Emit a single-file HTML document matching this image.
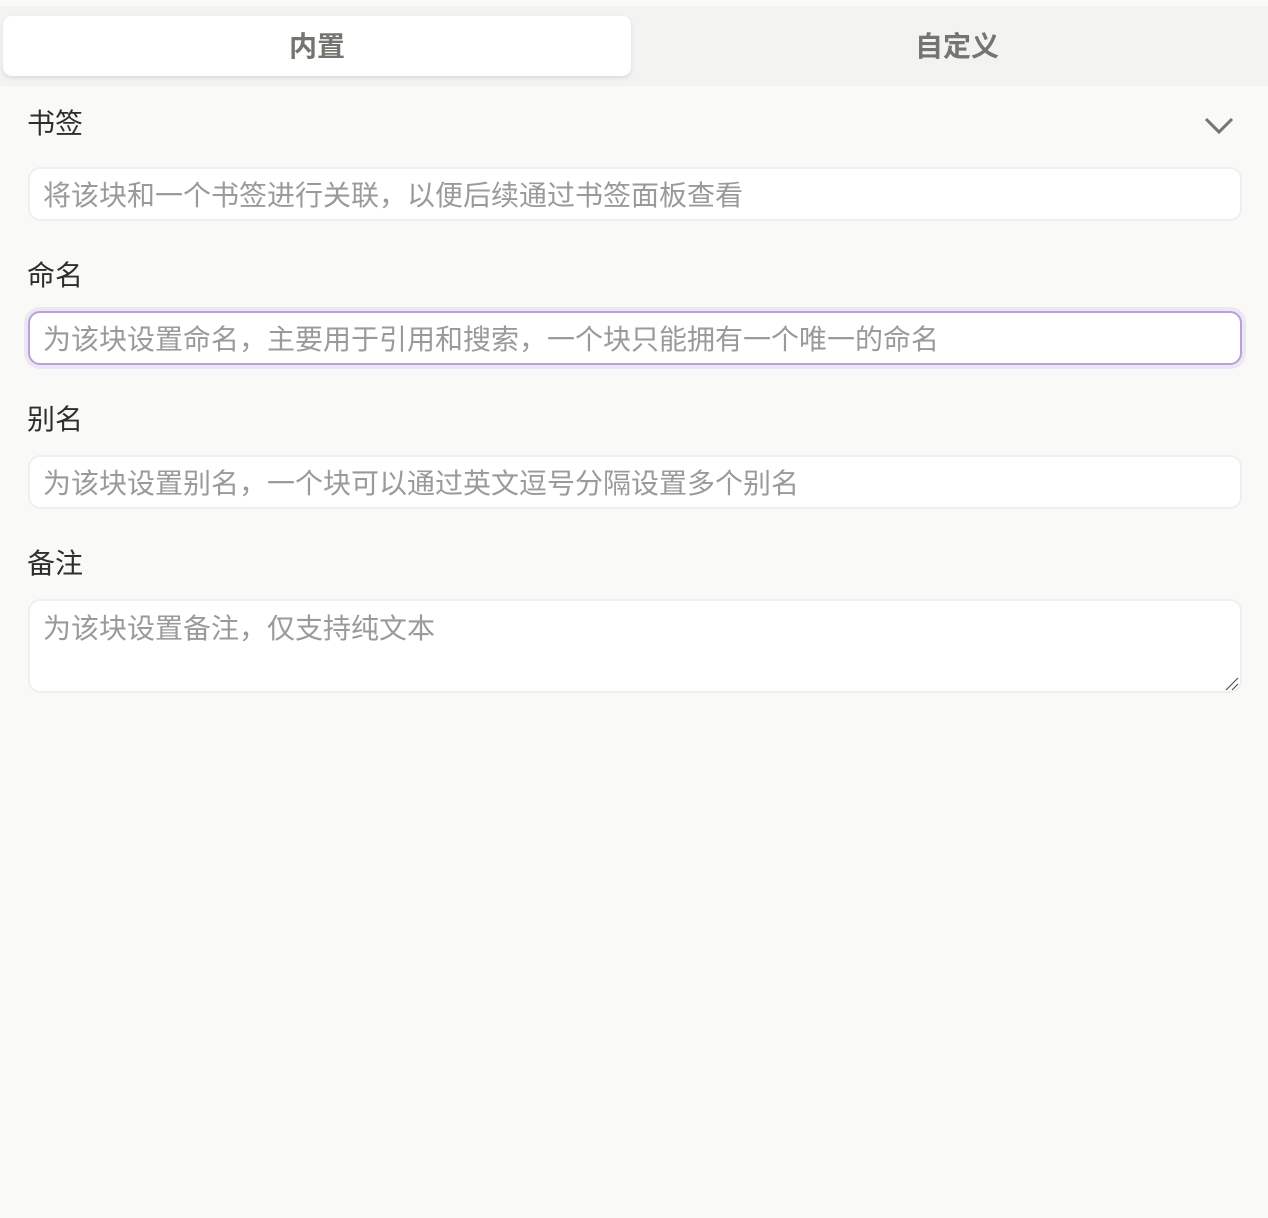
<!DOCTYPE html>
<html><head><meta charset="utf-8"><style>
*{box-sizing:border-box;margin:0;padding:0}
body{width:1268px;height:1218px;background:#f9f9f8;font-family:"Liberation Sans","Noto Sans CJK SC",sans-serif;position:relative;overflow:hidden}
.bar{position:absolute;left:0;top:6px;width:1268px;height:80px;background:#f3f3f2}
.tab{position:absolute;top:16px;height:60px;line-height:62px;text-align:center;font-size:28px;font-weight:bold;color:#76746f}
.t1{left:3px;width:628px;background:#fff;border-radius:9px;box-shadow:0 2px 5px rgba(0,0,0,.1)}
.t2{left:640px;width:634px}
.lab{position:absolute;left:27px;font-size:28px;color:#2e2e2b;line-height:36px}
.in{position:absolute;left:28px;width:1214px;height:54px;background:#fff;border:2px solid #efefee;border-radius:12px;font-size:28px;color:#9a9a9a;padding-left:13px;line-height:54px}
.focus{border-color:#b9a0d8;box-shadow:0 0 0 4px #ede7f3}
</style></head><body>
<div class="bar"></div>
<div class="tab t1">内置</div>
<div class="tab t2">自定义</div>
<div class="lab" style="top:106px">书签</div>
<svg style="position:absolute;left:1203px;top:116px" width="32" height="20"><path d="M3 3 L16 16 L29 3" fill="none" stroke="#76746f" stroke-width="3"/></svg>
<div class="in" style="top:167px">将该块和一个书签进行关联，以便后续通过书签面板查看</div>
<div class="lab" style="top:258px">命名</div>
<div class="in focus" style="top:311px">为该块设置命名，主要用于引用和搜索，一个块只能拥有一个唯一的命名</div>
<div class="lab" style="top:402px">别名</div>
<div class="in" style="top:455px">为该块设置别名，一个块可以通过英文逗号分隔设置多个别名</div>
<div class="lab" style="top:546px">备注</div>
<div class="in" style="top:599px;height:94px;line-height:56px">为该块设置备注，仅支持纯文本</div>
<svg style="position:absolute;left:1224px;top:677px" width="16" height="14"><path d="M2 13 L14 1 M8 13 L14 7" stroke="#555" stroke-width="1.2"/></svg>
</body></html>
